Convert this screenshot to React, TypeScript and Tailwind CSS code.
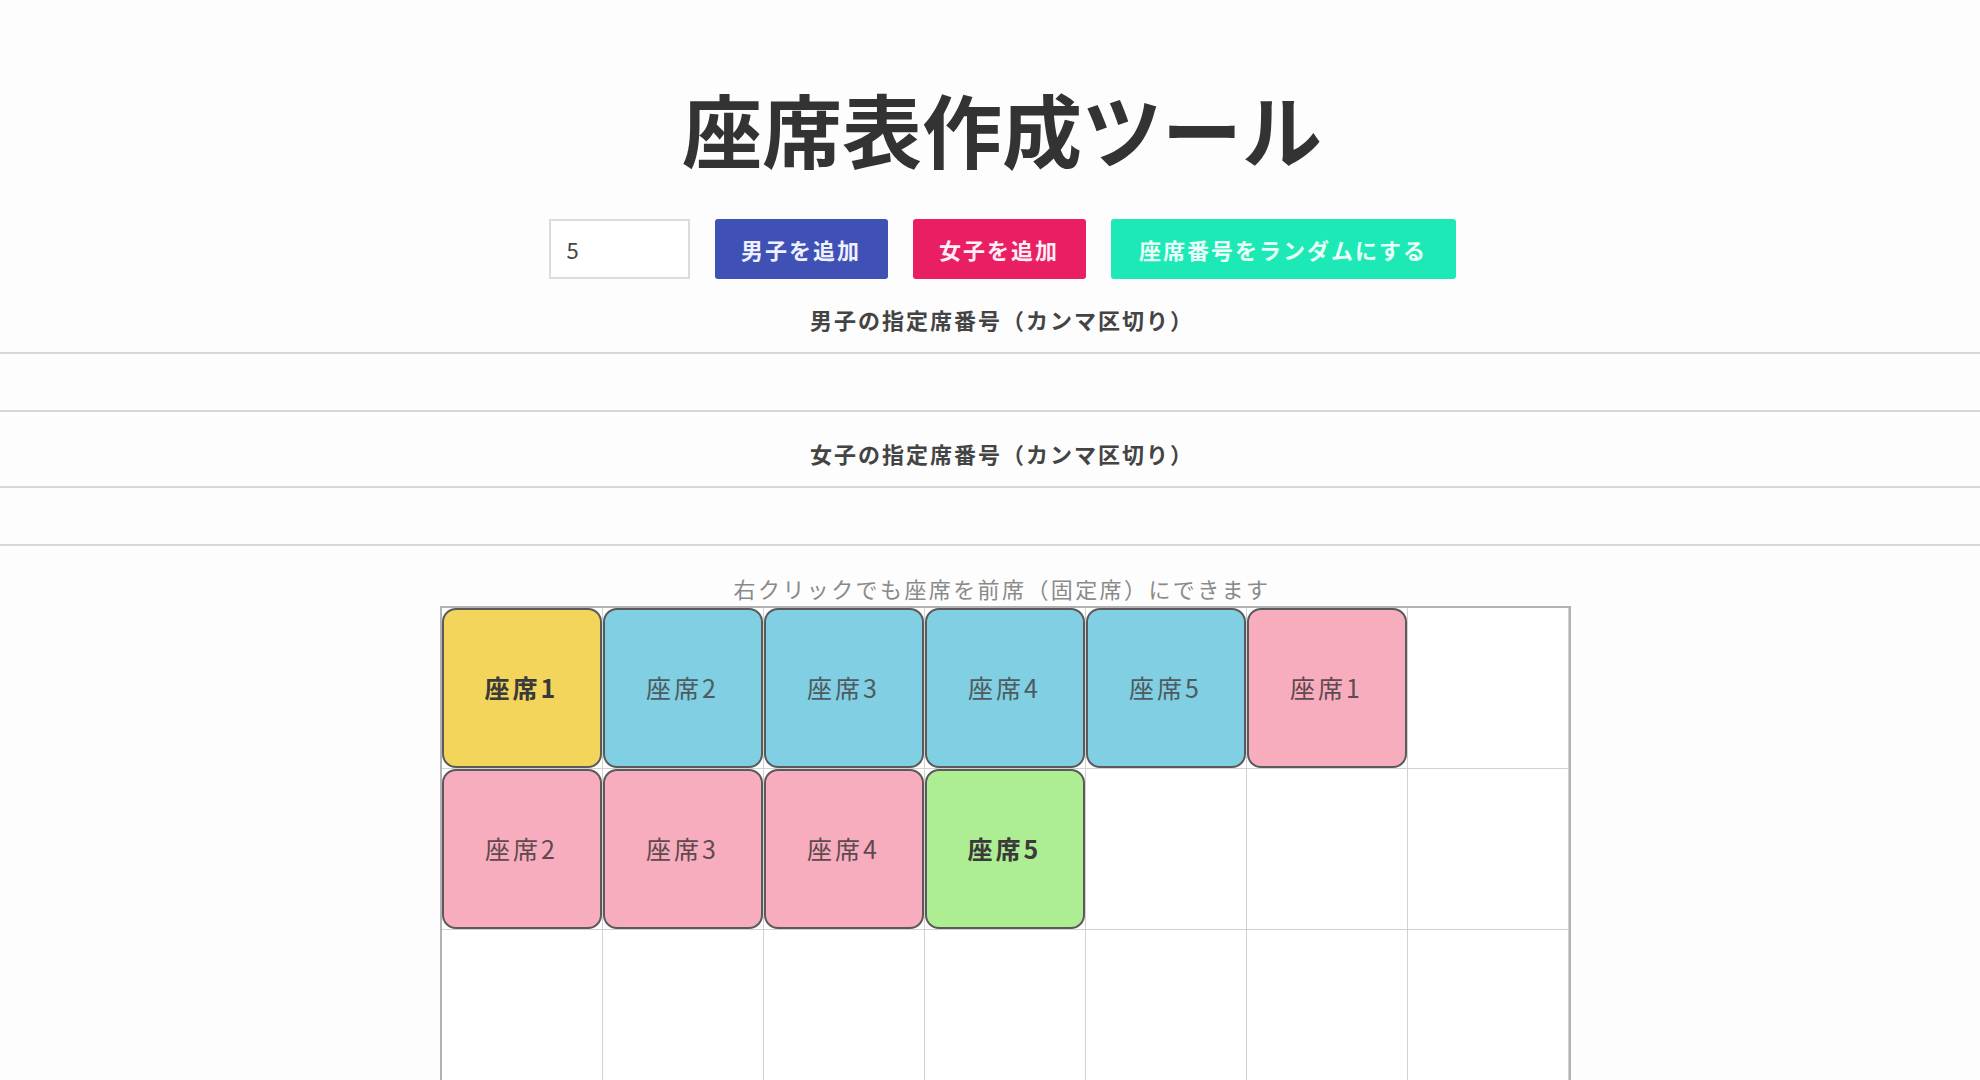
type Seat = { label: string; kind: 'fixed' | 'boy' | 'girl' | 'special' } | null

const seats: Seat[] = [
  { label: '座席1', kind: 'fixed' },
  { label: '座席2', kind: 'boy' },
  { label: '座席3', kind: 'boy' },
  { label: '座席4', kind: 'boy' },
  { label: '座席5', kind: 'boy' },
  { label: '座席1', kind: 'girl' },
  null,
  { label: '座席2', kind: 'girl' },
  { label: '座席3', kind: 'girl' },
  { label: '座席4', kind: 'girl' },
  { label: '座席5', kind: 'special' },
  null,
  null,
  null,
  ...Array(21).fill(null),
]

const seatStyle = {
  fixed: 'bg-[#f2d55a] font-bold text-[#3a3a3a]',
  boy: 'bg-[#80cfe2] text-[#4f5a60]',
  girl: 'bg-[#f8adbf] text-[#5e4a50]',
  special: 'bg-[#aeee92] font-bold text-[#3a3a3a]',
}

function SeatCell({ seat }: { seat: Seat }) {
  return (
    <div className="h-[161px] w-[161px] border-b border-r border-[#d2d2d2]">
      {seat && (
        <div
          className={`flex h-full w-full items-center justify-center rounded-[14px] border-2 border-[#5a5a5a] text-[25px] tracking-[3px] ${seatStyle[seat.kind]}`}
        >
          {seat.label}
        </div>
      )}
    </div>
  )
}

export default function App() {
  return (
    <div
      className="min-h-screen bg-[#fdfdfd] text-center text-[#333]"
      style={{ fontFamily: '"Noto Sans CJK JP", "Noto Sans", sans-serif' }}
    >
      <h1 className="pl-6 pt-[79px] text-[80px] font-bold leading-[96px] text-[#333]">
        座席表作成ツール
      </h1>

      <div className="mt-[44px] flex justify-center gap-[25px] pl-6">
        <input
          defaultValue="5"
          className="h-[60px] w-[141px] border-2 border-[#dcdcdc] bg-white pl-4 text-[22px] text-[#444] outline-none"
        />
        <button className="h-[60px] w-[173px] rounded-[3px] bg-[#3f51b5] text-[22px] font-bold tracking-[2px] text-[#eef0ff]">
          男子を追加
        </button>
        <button className="h-[60px] w-[173px] rounded-[3px] bg-[#e91e63] text-[22px] font-bold tracking-[2px] text-[#ffeef4]">
          女子を追加
        </button>
        <button className="h-[60px] w-[345px] rounded-[3px] bg-[#1de9b6] text-[22px] font-bold tracking-[2px] text-[#eafff8]">
          座席番号をランダムにする
        </button>
      </div>

      <p className="mt-[24px] pl-6 text-[22px] font-bold leading-[32px] tracking-[2px] text-[#444]">
        男子の指定席番号（カンマ区切り）
      </p>
      <input className="mt-[17px] block h-[60px] w-full border-y-2 border-[#d8d8d8] bg-transparent outline-none" />

      <p className="mt-[25px] pl-6 text-[22px] font-bold leading-[32px] tracking-[2px] text-[#444]">
        女子の指定席番号（カンマ区切り）
      </p>
      <input className="mt-[17px] block h-[60px] w-full border-y-2 border-[#d8d8d8] bg-transparent outline-none" />

      <p className="mt-[27px] pl-6 text-[22px] leading-[30px] tracking-[2.4px] text-[#8a8a8a]">
        右クリックでも座席を前席（固定席）にできます
      </p>

      <div className="mt-[3px] flex justify-center pl-[30px]">
        <div className="grid grid-cols-[repeat(7,161px)] border-2 border-[#b2b2b2] bg-white">
          {seats.map((s, i) => (
            <SeatCell key={i} seat={s} />
          ))}
        </div>
      </div>
    </div>
  )
}
